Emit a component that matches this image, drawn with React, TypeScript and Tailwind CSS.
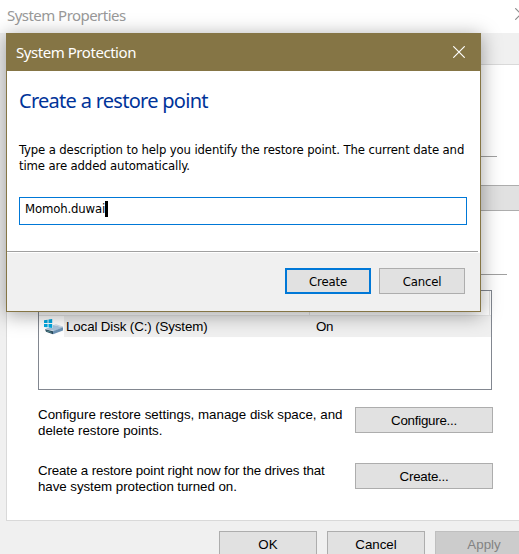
import type { ReactNode } from "react";

const ui = "font-['Liberation_Sans',sans-serif]";
const tahoma = "font-['DejaVu_Sans_Condensed','DejaVu_Sans',sans-serif] [font-stretch:condensed]";
const segoe = "font-['Noto_Sans','Open_Sans',sans-serif] [font-stretch:normal]";

function Button({ className, children }: { className: string; children?: ReactNode }) {
  return (
    <button type="button" className={`flex shrink-0 items-center justify-center border pt-[2px] whitespace-nowrap ${className}`}>
      {children}
    </button>
  );
}

function CloseIcon({ className }: { className: string }) {
  return (
    <svg viewBox="0 0 12 12" fill="none" stroke="currentColor" strokeWidth="1.15" className={`h-3 w-3 shrink-0 ${className}`}>
      <path d="M.3.3 11.7 11.7M11.7.3.3 11.7" />
    </svg>
  );
}

function DiskIcon() {
  return (
    <svg viewBox="0 0 20 16" className="h-4 w-5 shrink-0">
      <path d="M1 10.2 9.5 6 19 8.3 10.5 12Z" fill="#a9c3da" />
      <path d="M9.5 6 12 5.3 19 7.6V8.3Z" fill="#c8d8e7" />
      <path d="m1 10.2 8 2v3L2 12.8Z" fill="#29495c" />
      <path d="m9 12.2 10-4v3.2L9 15.2Z" fill="#6b91b3" />
      <path d="m2.5 11.5 5 1.4v.8l-5-1.4Z" fill="#5d9a9c" />
      <path d="M0 .3H8.700V9H0Z" fill="#ffffff" />
      <path d="M0 1.200 3.600.8V4H0ZM4.500.6 8.200 0v4H4.500ZM0 5h3.600v3.300L0 8ZM4.500 5h3.700v4l-3.700-.5Z" fill="#00a8e1" />
    </svg>
  );
}

function PropertiesWindow() {
  return (
    <div className={`flex h-[554px] w-[540px] flex-col bg-[#f0f0f0] text-[13.33px] leading-4 text-black ${ui}`}>
      <div className="flex h-[33px] shrink-0 items-start justify-between bg-white pr-[17px] pl-[7px] text-[#999999]">
        <span className={`pt-[5px] text-[15px] leading-5 tracking-[-0.54px] whitespace-nowrap ${segoe}`}>System Properties</span>
        <CloseIcon className="mt-2 -mr-[4px] text-[#888888]" />
      </div>
      <div className="mt-[31px] ml-[6px] flex h-[457px] w-[534px] shrink-0 flex-col border border-[#d9d9d9] bg-white pl-[31px]">
        <div className="mt-[91px] h-px w-[459px] shrink-0 bg-[#a0a0a0]" />
        <Button className="mt-7 ml-[320px] h-[26px] w-[170px] self-start border-[#adadad] bg-[#e1e1e1]" />
        <div className="mt-[63px] h-px w-[469px] shrink-0 bg-[#a0a0a0]" />
        <div className="mt-[15px] flex h-[100px] w-[454px] shrink-0 flex-col border border-[#828790]">
          <div className="flex h-[25px] shrink-0 border-b border-[#e5e5e5]">
            <div className="w-[271px] border-r border-[#e5e5e5]" />
            <div className="w-[180px] border-r border-[#e5e5e5]" />
          </div>
          <div className="flex h-[21px] shrink-0">
            <div className="flex w-[25px] items-center pl-[5px]"><DiskIcon /></div>
            <div className="flex flex-1 items-center bg-[#f0f0f0] pl-[2px]">
              <span className="w-[250px] tracking-[-0.12px] whitespace-nowrap">Local Disk (C:) (System)</span>
              <span className="tracking-[-0.3px]">On</span>
            </div>
          </div>
        </div>
        <div className="mt-4 flex w-[455px] shrink-0 items-start justify-between">
          <p className="pt-[1px] whitespace-nowrap">Configure restore settings, manage disk space, and<br />delete restore points.</p>
          <Button className="mt-[1px] h-[26px] w-[138px] border-[#adadad] bg-[#e1e1e1] tracking-[-0.25px]">Configure...</Button>
        </div>
        <div className="mt-[23px] flex w-[455px] shrink-0 items-start justify-between">
          <p className="pt-[1px] whitespace-nowrap"><span className="tracking-[-0.13px]">Create a restore point right now for the drives that</span><br /><span className="tracking-[-0.06px]">have system protection turned on.</span></p>
          <Button className="mt-[1px] h-[26px] w-[138px] border-[#adadad] bg-[#e1e1e1] tracking-[-0.25px]">Create...</Button>
        </div>
      </div>
      <div className="mt-[10px] ml-[219px] flex shrink-0 gap-[10px]">
        <Button className="h-[26px] w-[98px] border-[#adadad] bg-[#e1e1e1]">OK</Button>
        <Button className="h-[26px] w-[98px] border-[#adadad] bg-[#e1e1e1]">Cancel</Button>
        <Button className="h-[26px] w-[98px] border-[#bfbfbf] bg-[#cccccc] text-[#838383]">Apply</Button>
      </div>
    </div>
  );
}

function ProtectionDialog() {
  return (
    <div className={`absolute top-[33px] left-[6px] flex h-[279px] w-[475px] flex-col border border-[#857545] bg-white text-[13px] leading-4 text-black shadow-[0_3px_18px_1px_rgba(0,0,0,0.34)] ${tahoma}`}>
      <div className={`flex h-[37px] shrink-0 items-center justify-between bg-[#857545] pr-[15px] pl-[9px] text-[15px] text-white ${segoe}`}>
        <span className="-mt-[2px] tracking-[-0.45px] whitespace-nowrap">System Protection</span>
        <CloseIcon className="-mt-[2px] text-white" />
      </div>
      <div className="flex h-[180px] shrink-0 flex-col pl-3">
        <h1 className={`mt-[16px] text-[20px] leading-7 tracking-[-0.72px] whitespace-nowrap text-[#003399] ${segoe}`}>Create a restore point</h1>
        <p className="mt-[27px] tracking-[-0.135px] whitespace-nowrap">Type a description to help you identify the restore point. The current date and<br />time are added automatically.</p>
        <div className="mt-[23px] flex h-7 w-[448px] shrink-0 items-start border border-[#0078d7] pt-[3px] pl-[5px] tracking-[-0.15px]">
          <span>Momoh.duwai</span>
          <span className="h-4 w-[3px] bg-black" />
        </div>
      </div>
      <div className="mr-[2px] h-px shrink-0 bg-[#a0a0a0]" />
      <div className="flex flex-1 items-start justify-end gap-2 border-t border-white bg-[#f0f0f0] pt-[15px] pr-[15px] tracking-[-0.15px]">
        <Button className="h-[26px] w-[86px] border-2 border-[#0078d7] bg-[#e1e1e1]">Create</Button>
        <Button className="h-[26px] w-[86px] border-[#adadad] bg-[#e1e1e1]">Cancel</Button>
      </div>
    </div>
  );
}

export default function App() {
  return (
    <main className="relative h-[554px] w-[519px] overflow-hidden bg-[#f0f0f0]">
      <PropertiesWindow />
      <ProtectionDialog />
    </main>
  );
}
